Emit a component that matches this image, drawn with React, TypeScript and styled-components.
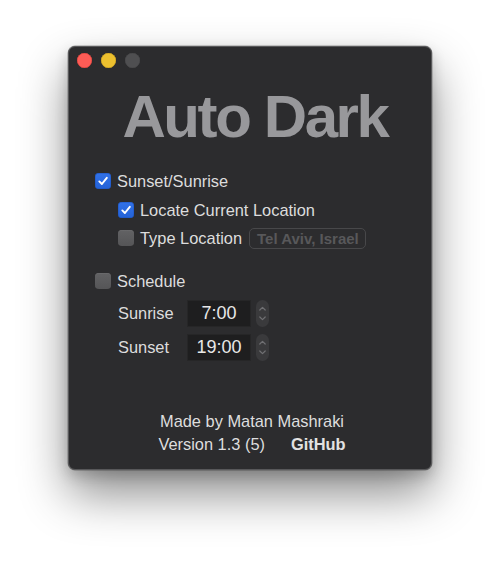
import React from "react";
import styled, { createGlobalStyle } from "styled-components";

const Global = createGlobalStyle`
  html, body { margin: 0; padding: 0; background: #ffffff; }
  body { font-family: "Liberation Sans", Arial, sans-serif; }
`;

const Stage = styled.div`
  width: 500px;
  height: 561px;
  box-sizing: border-box;
  padding: 46px 0 0 68px;
  background: #ffffff;
`;

const Window = styled.div`
  width: 364px;
  height: 424px;
  box-sizing: border-box;
  background: #2c2c2e;
  border: 1px solid #58585a;
  border-radius: 7px;
  box-shadow: 0 0 0 0.5px rgba(0, 0, 0, 0.35), 0 24px 48px rgba(0, 0, 0, 0.45), 0 6px 14px rgba(0, 0, 0, 0.18);
  display: flex;
  flex-direction: column;
  color: #dedede;
`;

const TitleBar = styled.div`
  height: 27px;
  display: flex;
  align-items: center;
  gap: 9px;
  padding-left: 8px;
`;

const Light = styled.span<{ $c: string; $b: string }>`
  width: 15px;
  height: 15px;
  border-radius: 50%;
  background: ${(p) => p.$c};
  box-shadow: inset 0 0 0 0.5px ${(p) => p.$b};
`;

const Title = styled.h1`
  margin: 13px 0 0 0;
  padding-left: 10px;
  height: 60px;
  font-size: 60px;
  line-height: 60px;
  font-weight: 700;
  letter-spacing: -2.4px;
  color: #98989b;
  text-align: center;
`;

const Options = styled.div`
  margin-top: 20px;
  display: flex;
  flex-direction: column;
`;

const Row = styled.div<{ $indent: number; $h?: number; $mt?: number }>`
  display: flex;
  align-items: center;
  height: ${(p) => p.$h ?? 28}px;
  margin-top: ${(p) => p.$mt ?? 0}px;
  padding-left: ${(p) => p.$indent}px;
  font-size: 16.4px;
`;

const Box = styled.span<{ $on: boolean }>`
  width: 16px;
  height: 16px;
  box-sizing: border-box;
  border-radius: 4px;
  margin-right: 6px;
  display: inline-flex;
  align-items: center;
  justify-content: center;
  background: ${(p) => (p.$on ? "linear-gradient(#3272e8, #2462d6)" : "linear-gradient(#626264, #555557)")};
  box-shadow: ${(p) => (p.$on ? "inset 0 0 0 0.5px #1d55c0" : "inset 0 0.5px 0 #707072")};
`;

const Label = styled.span`
  color: #dddddd;
  white-space: nowrap;
`;

const TextInput = styled.span`
  margin-left: 7px;
  width: 117px;
  height: 21px;
  box-sizing: border-box;
  border: 1px solid #48484a;
  border-radius: 5px;
  display: inline-flex;
  align-items: center;
  padding-left: 7px;
  font-size: 15px;
  font-weight: 700;
  color: #58585a;
  white-space: nowrap;
`;

const TimeLabel = styled.span`
  width: 69px;
  color: #dddddd;
`;

const TimeField = styled.span`
  width: 64px;
  height: 27px;
  box-sizing: border-box;
  background: #1e1e1f;
  border: 1px solid #262627;
  display: inline-flex;
  align-items: center;
  justify-content: center;
  font-size: 18px;
  color: #e8e8e8;
`;

const Stepper = styled.span`
  margin-left: 5px;
  width: 13px;
  height: 27px;
  border-radius: 6.5px;
  background: #3a3a3c;
  display: inline-flex;
  align-items: center;
  justify-content: center;
`;

const Footer = styled.div`
  margin-top: 46px;
  padding-left: 4px;
  display: flex;
  flex-direction: column;
  align-items: center;
  font-size: 16.4px;
  line-height: 23px;
  color: #dedede;
`;

const FooterLine = styled.div`
  display: flex;
  gap: 26px;
`;

const Link = styled.span`
  font-weight: 700;
  color: #e2e2e2;
`;

const Check = () => (
  <svg width="12" height="12" viewBox="0 0 12 12">
    <path d="M2.3 6.4 L4.9 9 L9.8 2.8" fill="none" stroke="#ffffff" strokeWidth="1.9" strokeLinecap="round" strokeLinejoin="round" />
  </svg>
);

const Chevrons = () => (
  <svg width="9" height="21" viewBox="0 0 9 21">
    <path d="M1.8 7 L4.5 4.3 L7.2 7" fill="none" stroke="#707073" strokeWidth="1.2" strokeLinecap="round" strokeLinejoin="round" />
    <path d="M1.8 14 L4.5 16.7 L7.2 14" fill="none" stroke="#707073" strokeWidth="1.2" strokeLinecap="round" strokeLinejoin="round" />
  </svg>
);

const CheckBox = ({ on }: { on: boolean }) => <Box $on={on}>{on && <Check />}</Box>;

export default function App() {
  return (
    <Stage>
      <Global />
      <Window>
        <TitleBar>
          <Light $c="#fd5c56" $b="#d8403b" />
          <Light $c="#ecc02f" $b="#c79c1e" />
          <Light $c="#4f4f51" $b="#474749" />
        </TitleBar>
        <Title>Auto Dark</Title>
        <Options>
          <Row $indent={26}>
            <CheckBox on />
            <Label>Sunset/Sunrise</Label>
          </Row>
          <Row $indent={49} $mt={1}>
            <CheckBox on />
            <Label>Locate Current Location</Label>
          </Row>
          <Row $indent={49}>
            <CheckBox on={false} />
            <Label>Type Location</Label>
            <TextInput>Tel Aviv, Israel</TextInput>
          </Row>
          <Row $indent={26} $mt={15}>
            <CheckBox on={false} />
            <Label>Schedule</Label>
          </Row>
          <Row $indent={49} $h={34} $mt={1}>
            <TimeLabel>Sunrise</TimeLabel>
            <TimeField>7:00</TimeField>
            <Stepper>
              <Chevrons />
            </Stepper>
          </Row>
          <Row $indent={49} $h={34}>
            <TimeLabel>Sunset</TimeLabel>
            <TimeField>19:00</TimeField>
            <Stepper>
              <Chevrons />
            </Stepper>
          </Row>
        </Options>
        <Footer>
          <div>Made by Matan Mashraki</div>
          <FooterLine>
            <span>Version 1.3 (5)</span>
            <Link>GitHub</Link>
          </FooterLine>
        </Footer>
      </Window>
    </Stage>
  );
}
